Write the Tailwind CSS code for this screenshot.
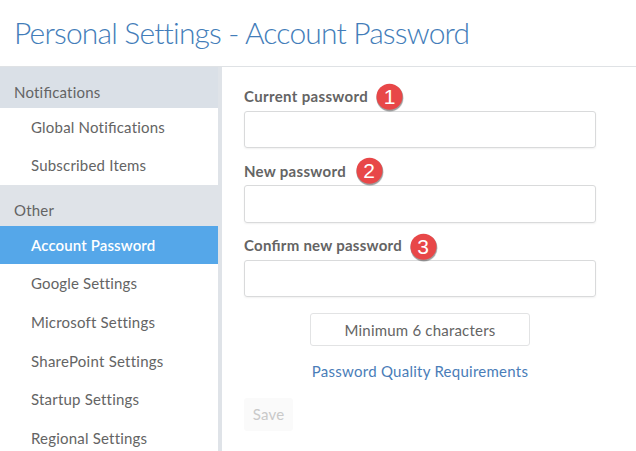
<!DOCTYPE html>
<html lang="en">
<head>
<meta charset="utf-8">
<title>Personal Settings - Account Password</title>
<script src="https://cdn.jsdelivr.net/npm/@tailwindcss/browser@4"></script>
</head>
<body class="w-[636px] h-[451px] overflow-hidden bg-white font-['Lato',sans-serif] text-[15px] tracking-[0.2px] text-[#646464]">
<header class="h-[67px] border-b border-[#dfe2e5] pl-[14px] pb-[2px] flex items-center">
  <h1 class="text-[30px] font-light tracking-[-0.83px] [font-variant-ligatures:none] text-[#437db9] leading-[60px] whitespace-nowrap">Personal Settings - Account Password</h1>
</header>
<div class="flex h-[384px]">
  <nav class="w-[222px] shrink-0 border-r-4 border-[#dfe3e8] overflow-hidden whitespace-nowrap">
    <h2 class="h-[41px] w-[222px] bg-[#dae0e7] pl-[14px] leading-[51px]">Noti<span class="[font-feature-settings:'liga'_1]">fi</span>cations</h2>
    <a class="block h-[39px] pl-[31px] leading-[39px]">Global Noti<span class="[font-feature-settings:'liga'_1]">fi</span>cations</a>
    <a class="block h-[38px] pl-[31px] leading-[37px]">Subscribed Items</a>
    <h2 class="h-[41px] bg-[#dfe3e8] pl-[14px] leading-[51px]">Other</h2>
    <a class="block h-[38px] pl-[31px] leading-[38px] bg-[#55a7e9] text-white font-semibold tracking-[0.12px]">Account Password</a>
    <a class="block h-[39px] pl-[31px] leading-[39px] tracking-[0.14px]">Google Settings</a>
    <a class="block h-[39px] pl-[31px] leading-[39px]">Microsoft Settings</a>
    <a class="block h-[38px] pl-[31px] leading-[39px] tracking-[0.25px]">SharePoint Settings</a>
    <a class="block h-[39px] pl-[31px] leading-[39px]">Startup Settings</a>
    <a class="block h-[39px] pl-[31px] leading-[39px]">Regional Settings</a>
  </nav>
  <main class="pl-[22px] pt-[16px] w-[374px] shrink-0">
    <div class="flex h-[28px] items-start font-bold leading-[27px]">
      <span class="w-[132px] tracking-[0.35px]">Current password</span>
      <svg class="overflow-visible" width="28" height="30" viewBox="0 0 28 30"><circle cx="14" cy="15.2" r="13.6" fill="#555" opacity=".2"/><circle cx="13.8" cy="14.8" r="13.4" fill="#444" opacity=".4"/><circle cx="13.5" cy="13.8" r="13" fill="#e84748"/><text x="13.5" y="21" text-anchor="middle" font-family="Liberation Sans" font-size="21" font-weight="400" letter-spacing="0" fill="#fff">1</text></svg>
    </div>
    <div class="h-[37px] w-[352px] border border-[#d9dadb] rounded-[3px] shadow-[0_1px_2px_rgba(0,0,0,0.06)]"></div>
    <div class="mt-[9px] flex h-[28px] items-start font-bold leading-[29px]">
      <span class="w-[112px] tracking-[0.3px]">New password</span>
      <svg class="overflow-visible" width="28" height="30" viewBox="0 0 28 30"><circle cx="14" cy="15.2" r="13.6" fill="#555" opacity=".2"/><circle cx="13.8" cy="14.8" r="13.4" fill="#444" opacity=".4"/><circle cx="13.5" cy="13.8" r="13" fill="#e84748"/><text x="13" y="21" text-anchor="middle" font-family="Liberation Sans" font-size="21" font-weight="400" letter-spacing="0" fill="#fff">2</text></svg>
    </div>
    <div class="h-[38px] w-[352px] border border-[#d9dadb] rounded-[3px] shadow-[0_1px_2px_rgba(0,0,0,0.06)]"></div>
    <div class="mt-[9px] flex h-[28px] items-start font-bold leading-[27px]">
      <span class="w-[166px] tracking-[0.25px]">Con<span class="[font-feature-settings:'liga'_1]">fi</span>rm new password</span>
      <svg class="overflow-visible" width="28" height="30" viewBox="0 0 28 30"><circle cx="14" cy="16.2" r="13.6" fill="#555" opacity=".2"/><circle cx="13.8" cy="15.8" r="13.4" fill="#444" opacity=".4"/><circle cx="13.5" cy="14.8" r="13" fill="#e84748"/><text x="13" y="22" text-anchor="middle" font-family="Liberation Sans" font-size="21" font-weight="400" letter-spacing="0" fill="#fff">3</text></svg>
    </div>
    <div class="h-[37px] w-[352px] border border-[#d9dadb] rounded-[3px] shadow-[0_1px_2px_rgba(0,0,0,0.06)]"></div>
    <div class="mt-[16px] mx-auto h-[33px] w-[220px] border border-[#e2e3e4] rounded-[3px] text-center leading-[33px]">Minimum 6 characters</div>
    <div class="mt-[15px] h-[21px] text-center leading-[20px] tracking-[0.26px] text-[#4a7db8]">Password Quality Requirements</div>
    <button class="mt-[16px] block h-[33px] w-[49px] rounded-[3px] bg-[#fafafa] text-center leading-[33px] text-[#c9c9c9]">Save</button>
  </main>
</div>
</body>
</html>
